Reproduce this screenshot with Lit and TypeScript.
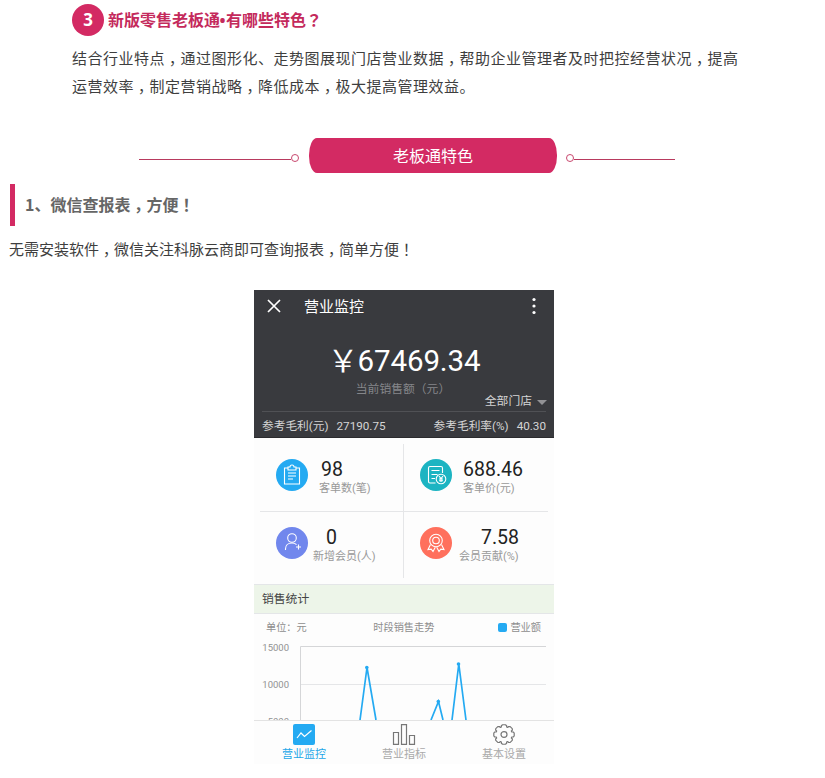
import { LitElement, html, css, svg } from "lit";
import { customElement } from "lit/decorators.js";

const clipboard = svg`<path d="M12 9H8.500v16h15V9H20M12 8h2q0-2 2-2t2 2h2v3h-8zM12 14h8M12 17h8M12 20h5"/>`;
const member = svg`<circle cx="16" cy="11" r="4.300"/><path d="M9.500 23v-1c0-3.500 2.500-6 6.500-6 2 0 3.500.6 4.500 1.600M22.500 17.500v5M20 20h5"/>`;
const receipt = svg`<path d="M15.500 24H10q-1.500 0-1.500-1.500V9q0-1.500 1.500-1.500h11q1.500 0 1.500 1.500v5M11.500 11.500h8M11.500 15.500h6M11.500 19.500h3.500"/><circle cx="21" cy="20" r="4.800"/><path d="M19 17l2 2.500 2-2.500M21 19.500V23M19 20h4M19 21.700h4"/>`;
const medal = svg`<circle cx="16" cy="13.500" r="6.300"/><circle cx="16" cy="13.500" r="3.300"/><path d="M10.500 17.500L8 22.500l3.200-.3 1.800 2.300 2.300-4.300M21.500 17.500l2.500 5-3.200-.3-1.800 2.300-2.300-4.300"/>`;

/* Eight-toothed gear: wide rounded teeth with narrow notches between them. */
const gearPath =
  "M" +
  Array.from({ length: 8 }, (_, i) =>
    [[-16, 9.6], [-8, 10.3], [8, 10.3], [16, 9.6], [18.5, 8.2], [26.5, 8.2]].map(([deg, r]) => {
      const a = ((i * 45 + deg) * Math.PI) / 180;
      return `${(11 + r * Math.sin(a)).toFixed(2)} ${(11 - r * Math.cos(a)).toFixed(2)}`;
    }).join("L")
  ).join("L") +
  "Z";

const stats = [
  { cls: "a", icon: clipboard, value: "98", label: "客单数(笔)" },
  { cls: "b", icon: receipt, value: "688.46", label: "客单价(元)" },
  { cls: "c", icon: member, value: "0", label: "新增会员(人)" },
  { cls: "d", icon: medal, value: "7.58", label: "会员贡献(%)" },
];

/* Centres full-width commas, question and exclamation marks in their em box. */
const zh = (text: string) =>
  text.split(/([，！？])/).map((part) =>
    part === "，" ? html`<span class="comma">，</span>` : part === "！" || part === "？" ? html`<span class="mark">${part}</span>` : part
  );

@customElement("app-root")
export class AppRoot extends LitElement {
  static styles = css`
    :host { display: block; height: 778px; overflow: hidden; background: #fff; color: #3e3e3e; font: 15px/28px "Noto Sans CJK SC", sans-serif; }
    * { box-sizing: border-box; }
    svg { display: block; fill: none; stroke: currentColor; }
    .comma, .mark { font-family: "Noto Sans CJK TC", sans-serif; line-height: 0; }
    .comma { vertical-align: -.3em; }
    .title { display: flex; align-items: center; gap: 4px; padding: 4px 0 0 72px; height: 36px; color: #c42a5c; font-size: 16px; font-weight: 700; white-space: nowrap; }
    .title > span:last-child { padding-bottom: 2px; }
    .num { width: 32px; height: 32px; border-radius: 50%; background: #d32a63; color: #fff; text-align: center; line-height: 32px; font-family: "Open Sans", sans-serif; font-size: 17px; }
    .dot { display: inline-block; width: 6px; text-align: center; font-family: "Open Sans", sans-serif; text-indent: -1px; }
    .intro { margin: 8px 0 0 72px; letter-spacing: .5px; white-space: nowrap; }
    .banner { display: flex; margin: 38px 0 0 139px; height: 35px; }
    .line { display: flex; width: 160px; align-items: flex-start; padding-top: 16px; }
    .line i { flex: 1; height: 1px; background: #b83a5e; margin-top: 5px; }
    .line b { width: 8px; height: 8px; border: 1px solid #c9486f; border-radius: 50%; }
    .line.right { width: 109px; }
    .pill { width: 248px; margin: 0 9px 0 10px; border-radius: 8px / 17px; background: #d32a63; color: #fff; text-align: center; font-size: 16px; line-height: 35px; }
    .head { margin: 11px 0 0 10px; border-left: 5px solid #d32a63; height: 42px; padding-left: 10px; line-height: 40px; font-size: 16px; font-weight: 700; color: #666; }
    .note { padding-left: 9px; margin-top: 9px; }
    .phone { width: 300px; height: 474px; margin: 27px 0 0 254px; background: #fdfdfd; font-family: Roboto, "Noto Sans CJK SC", sans-serif; }
    .dark { height: 148px; background: #393a3e; color: #d5d5d5; border-bottom: 1px solid #2b2b2e; }
    .bar { display: flex; align-items: center; height: 32px; padding: 0 15px 0 13px; color: #fff; font-size: 15px; }
    .bar span { flex: 1; padding: 1px 0 0 23px; }
    .total { height: 57px; padding: 21px 0 0 3px; line-height: 36px; text-align: center; font-size: 29.500px; color: #fff; letter-spacing: -.1px; white-space: nowrap; }
    .yen { font-family: "Noto Sans CJK SC", sans-serif; font-weight: 350; font-size: 31px; display: inline-block; width: 27px; height: 36px; line-height: 31px; vertical-align: top; text-indent: -3px; }
    .now { height: 12px; line-height: 21px; padding-right: 2px; text-align: center; font-size: 11.800px; color: #85868a; }
    .store { display: flex; justify-content: flex-end; align-items: center; gap: 5px; height: 20px; padding-right: 7px; font-size: 11.800px; }
    .store i { border: 5px solid transparent; border-top-color: #929295; border-bottom: 0; margin-top: 2px; }
    .profit { display: flex; gap: 8px; margin: 0 8px; border-top: 1px solid #505155; font-size: 11.700px; line-height: 29px; white-space: nowrap; }
    .profit :nth-child(2) { flex: 1; }
    .grid { display: grid; grid-template: 68px 66px / 144px 144px; padding: 6px; height: 146px; }
    .cell { display: flex; }
    .a, .b { border-bottom: 1px solid #e5e6e8; }
    .a, .c { border-right: 1px solid #e5e6e8; }
    .disc { width: 32px; height: 32px; margin: 15px 0 0 16px; border-radius: 50%; color: #fff; }
    .a .disc { background: #24aaf2; }
    .b .disc { background: #1cb4c2; }
    .c .disc { background: #7187ed; }
    .d .disc { background: #ff705d; }
    .data { font-size: 12px; color: #999; padding-top: 15px; white-space: nowrap; }
    .data strong { display: block; height: 20px; line-height: 21px; font-size: 19.500px; font-weight: 400; color: #222; }
    .data p { margin: 0; line-height: 19px; font-size: 11px; }
    .a .data { padding-left: 11px; }
    .a strong { padding-left: 2px; }
    .b .data { padding-left: 11px; }
    .c .data { padding-left: 5px; }
    .c strong { padding-left: 13px; }
    .d .data { padding-left: 7px; }
    .d strong { padding-left: 22px; }
    .section { height: 30px; border: solid #e4e6e8; border-width: 1px 0; background: #edf5e9; padding-left: 8px; line-height: 28px; font-size: 11.800px; color: #444; }
    .legend { display: flex; align-items: center; height: 26px; padding: 2px 13px 0 12px; color: #8e8e8e; font-size: 10.200px; }
    .legend span { flex: 1; }
    .legend .mid { flex: none; margin-right: 64px; }
    .legend i { width: 9px; height: 9px; border-radius: 2px; background: #24aaf2; margin: 0 3px 2px 0; }
    .plot { display: flex; height: 80px; overflow: hidden; }
    .ticks { width: 35px; text-align: right; color: #929292; font-size: 9.500px; line-height: 37px; margin-top: -11px; }
    .plot svg { margin-left: 11px; }
    .tabs { display: flex; height: 44px; border-top: 1px solid #e3e3e3; font-size: 11px; text-align: center; color: #aaa; }
    .tab { width: 100px; line-height: 19px; }
    .tab svg { margin: 3px auto 0; color: #777; }
    .on { color: #22a6e8; }
  `;

  render() {
    return html`
      <div class="title"><span class="num">3</span><span>新版零售老板通<span class="dot">•</span>${zh("有哪些特色？")}</span></div>
      <div class="intro">${zh("结合行业特点，通过图形化、走势图展现门店营业数据，帮助企业管理者及时把控经营状况，提高")}<br />${zh("运营效率，制定营销战略，降低成本，极大提高管理效益。")}</div>
      <div class="banner">
        <div class="line"><i></i><b></b></div>
        <div class="pill">老板通特色</div>
        <div class="line right"><b></b><i></i></div>
      </div>
      <div class="head">${zh("1、微信查报表，方便！")}</div>
      <div class="note">${zh("无需安装软件，微信关注科脉云商即可查询报表，简单方便！")}</div>
      <div class="phone">
        <div class="dark">
          <div class="bar">
            <svg width="14" height="14" stroke-width="1.700"><path d="M1 1l12 12M13 1L1 13" /></svg>
            <span>营业监控</span>
            <svg width="10" height="18" fill="none"><g fill="#fff" stroke="none"><circle cx="5" cy="2.500" r="1.600" /><circle cx="5" cy="9" r="1.600" /><circle cx="5" cy="15.500" r="1.600" /></g></svg>
          </div>
          <div class="total"><span class="yen">￥</span>67469.34</div>
          <div class="now">当前销售额（元）</div>
          <div class="store">全部门店<i></i></div>
          <div class="profit"><span>参考毛利(元)</span><span>27190.75</span><span>参考毛利率(%)</span><span>40.30</span></div>
        </div>
        <div class="grid">
          ${stats.map((s) => html`<div class="cell ${s.cls}">
            <div class="disc"><svg width="32" height="32" stroke-width="1.100">${s.icon}</svg></div>
            <div class="data"><strong>${s.value}</strong><p>${s.label}</p></div>
          </div>`)}
        </div>
        <div class="section">销售统计</div>
        <div class="legend"><span>单位：元</span><span class="mid">时段销售走势</span><i></i>营业额</div>
        <div class="plot">
          <div class="ticks">15000<br />10000<br />5000</div>
          <svg width="247" height="80">
            <path d="M.5 80V6.500H246" stroke="#d5d6d8" /><path d="M1 44.500H246" stroke="#e5e6e8" />
            <path d="M60 80L67 27.500 76 80M131 80L138.500 61.500 143 80M152 80L158.800 24 166 80" stroke="#24aaf2" stroke-width="1.700" />
            <g fill="#24aaf2" stroke="none"><circle cx="66.800" cy="27.500" r="1.800" /><circle cx="138.300" cy="61.500" r="1.800" /><circle cx="158.500" cy="24" r="1.800" /></g>
          </svg>
        </div>
        <div class="tabs">
          <div class="tab on">
            <svg width="22" height="21"><rect width="22" height="21" rx="2" fill="#24aaf2" stroke="none" /><path d="M4 14l4-5 3.500 3.500 7-6" stroke="#fff" stroke-width="1.200" /></svg>营业监控
          </div>
          <div class="tab">
            <svg width="24" height="21"><path d="M1.500 8.500h5v11.800h-5zM9.500.7h5v19.600h-5zM17.500 11.500h5v8.800h-5z" stroke-width="1.200" /></svg>营业指标
          </div>
          <div class="tab">
            <svg width="22" height="21" viewBox="0 0 22 22" preserveAspectRatio="none" stroke-width="1.200"><path d=${gearPath} stroke-linejoin="round" /><circle cx="11" cy="11" r="3" /></svg>基本设置
          </div>
        </div>
      </div>
    `;
  }
}
